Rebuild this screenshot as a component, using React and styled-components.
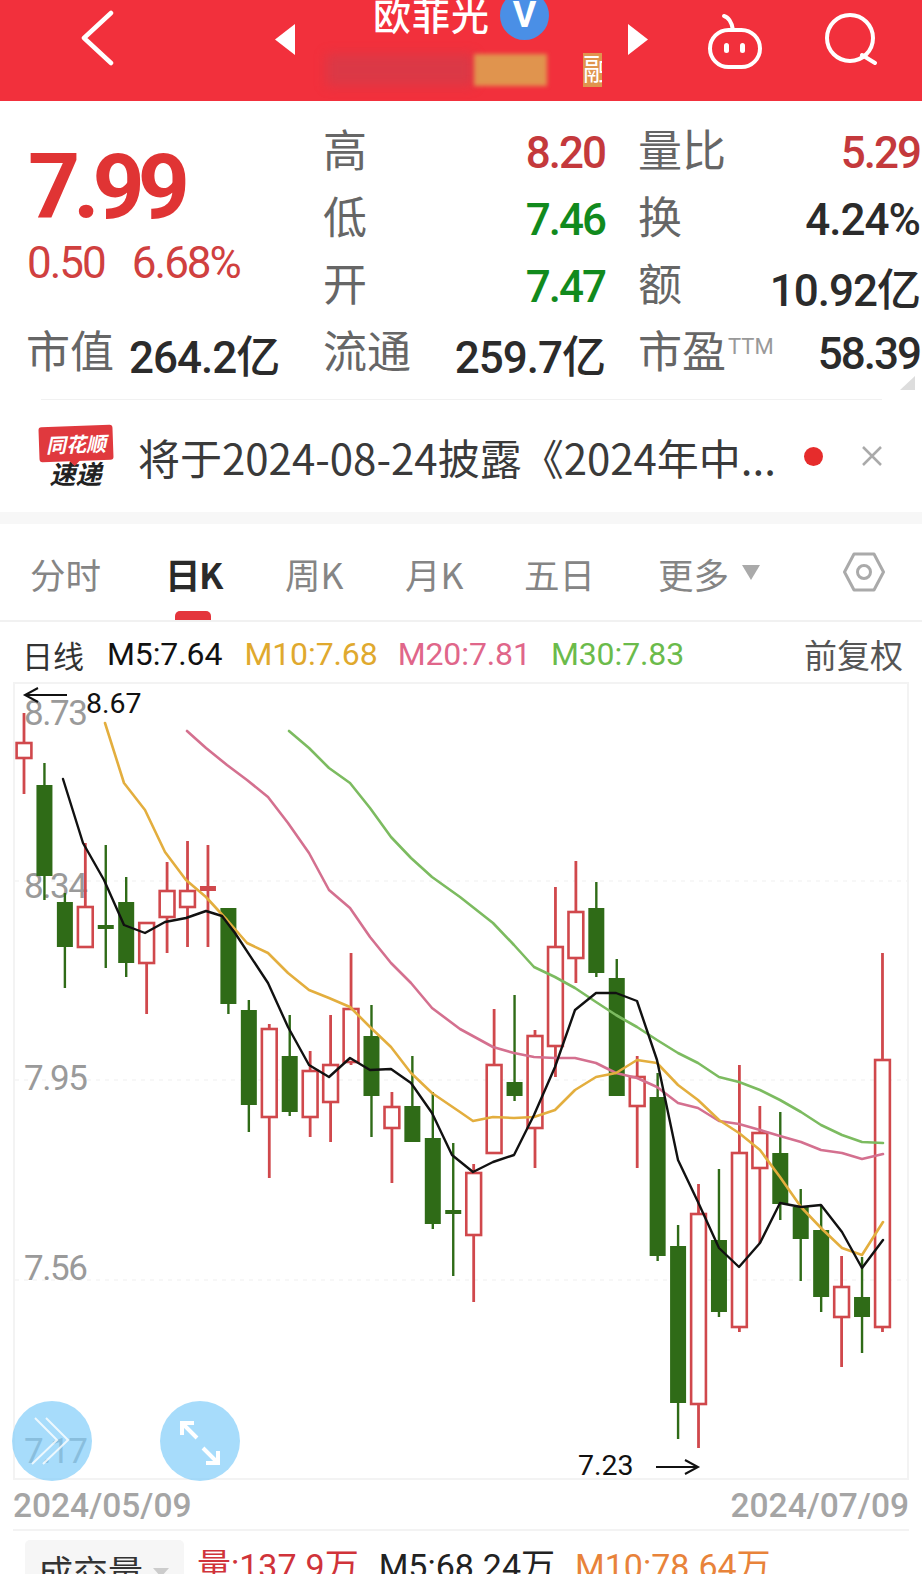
import styled, { createGlobalStyle } from 'styled-components';

const RED = '#d0484c';
const GREEN = '#2f6b17';

// up, body top, body bottom, high, low
const CANDLES = [
  [1, 743, 758, 713, 794],
  [0, 785, 876, 763, 900],
  [0, 902, 947, 893, 988],
  [1, 907, 947, 843, 947],
  [0, 925, 929, 845, 968],
  [0, 902, 963, 877, 977],
  [1, 923, 963, 923, 1014],
  [1, 891, 917, 862, 953],
  [1, 891, 907, 841, 947],
  [1, 886, 891, 845, 947],
  [0, 908, 1004, 908, 1014],
  [0, 1010, 1105, 1000, 1132],
  [1, 1029, 1117, 1024, 1178],
  [0, 1056, 1112, 1015, 1116],
  [1, 1071, 1117, 1051, 1137],
  [1, 1065, 1102, 1015, 1142],
  [1, 1009, 1062, 953, 1065],
  [0, 1036, 1096, 1005, 1137],
  [1, 1107, 1128, 1092, 1183],
  [0, 1106, 1142, 1056, 1142],
  [0, 1138, 1224, 1092, 1229],
  [0, 1210, 1214, 1143, 1276],
  [1, 1173, 1235, 1164, 1302],
  [1, 1065, 1153, 1009, 1153],
  [0, 1082, 1096, 995, 1101],
  [1, 1036, 1128, 1030, 1168],
  [1, 947, 1046, 887, 1077],
  [1, 912, 958, 861, 983],
  [0, 908, 973, 882, 977],
  [0, 978, 1096, 959, 1096],
  [1, 1077, 1106, 1056, 1168],
  [0, 1097, 1256, 1073, 1261],
  [0, 1246, 1403, 1225, 1439],
  [1, 1214, 1404, 1184, 1448],
  [0, 1240, 1312, 1169, 1317],
  [1, 1153, 1327, 1065, 1332],
  [1, 1133, 1168, 1106, 1243],
  [0, 1153, 1204, 1112, 1220],
  [0, 1207, 1239, 1189, 1281],
  [0, 1230, 1297, 1205, 1312],
  [1, 1287, 1317, 1256, 1367],
  [0, 1297, 1317, 1257, 1353],
  [1, 1060, 1327, 953, 1332],
];

const M5 = '63,779 83,843 104,880 124,925 145,933 165,922 186,918 206,911 222,916 235,933 268,983 288,1027 309,1065 329,1077 350,1058 370,1070 391,1069 411,1083 432,1113 452,1155 473,1172 493,1162 514,1155 534,1115 555,1067 575,1010 596,993 616,993 637,1001 657,1060 678,1160 698,1202 719,1248 739,1267 760,1243 780,1203 801,1207 821,1205 842,1232 862,1268 883,1240';
const M10 = '105,723 124,783 145,810 165,852 186,880 206,897 227,920 247,943 268,953 288,973 309,990 329,998 350,1007 370,1027 391,1047 411,1073 432,1093 460,1112 473,1121 493,1117 514,1118 534,1117 555,1110 575,1090 596,1077 616,1073 637,1060 657,1063 678,1085 698,1100 719,1120 739,1133 760,1150 780,1177 801,1207 821,1228 842,1248 862,1255 883,1222';
const M20 = '187,731 206,748 227,765 247,780 268,797 288,823 309,853 329,890 350,908 370,937 391,963 411,983 432,1008 460,1029 493,1047 514,1053 534,1057 555,1058 575,1058 596,1063 616,1073 637,1078 657,1087 678,1103 698,1108 719,1121 739,1124 760,1130 780,1136 801,1142 821,1150 842,1153 862,1159 883,1154';
const M30 = '289,731 309,748 329,768 350,783 370,808 391,837 411,858 432,877 460,897 493,923 514,945 534,967 555,977 575,988 596,1002 616,1015 637,1027 657,1040 678,1053 698,1063 719,1077 739,1082 760,1090 780,1100 801,1112 821,1125 842,1135 862,1142 883,1143';

const AXIS = [
  ['8.73', 725],
  ['8.34', 898],
  ['7.95', 1090],
  ['7.56', 1280],
  ['7.17', 1463],
];

const GlobalStyle = createGlobalStyle`
  html, body {
    margin: 0;
    padding: 0;
    background: #fff;
  }
  #root {
    width: 922px;
    height: 1574px;
    overflow: hidden;
    font-family: Roboto, "Noto Sans CJK SC", sans-serif;
  }
`;

const Header = styled.header`
  display: flex;
  align-items: flex-start;
  height: 101px;
  overflow: hidden;
  background: #f2303c;
`;

const HeaderIcon = styled.svg`
  flex: none;
  margin-left: ${p => p.$left}px;
  margin-top: ${p => p.$top}px;
`;

const TitleBlock = styled.div`
  flex: none;
  width: 277px;
  margin-left: 31px;
  margin-top: -3px;
`;

const TitleRow = styled.div`
  display: flex;
  align-items: center;
  height: 40px;
  padding-left: 47px;
`;

const Title = styled.span`
  color: #fff;
  font-size: 38px;
  font-weight: 500;
  line-height: 40px;
  letter-spacing: 1px;
  white-space: nowrap;
`;

const Badge = styled.span`
  flex: none;
  display: flex;
  align-items: center;
  justify-content: center;
  width: 49px;
  height: 49px;
  margin: -4px 0 0 10px;
  border-radius: 50%;
  background: #4a8fe6;
  color: #fff;
  font-size: 36px;
  font-weight: 700;
`;

const SubRow = styled.div`
  display: flex;
  align-items: center;
  height: 37px;
  margin-top: 14px;
`;

const Smudge = styled.span`
  flex: none;
  width: ${p => p.$w}px;
  height: ${p => p.$h}px;
  background: ${p => p.$color};
  filter: blur(${p => p.$blur}px);
`;

const TagClip = styled.span`
  flex: none;
  width: 19px;
  height: 34px;
  margin-left: 36px;
  overflow: hidden;
  background: #e0944e;
  color: #fff;
  font-size: 30px;
  line-height: 34px;
`;

const Stats = styled.section`
  position: relative;
  display: grid;
  grid-template-columns: 264px 282px 282px;
  grid-template-rows: repeat(4, 67px);
  column-gap: 33px;
  height: 299px;
  box-sizing: border-box;
  padding: 18px 0 0 26px;
  &::after {
    content: '';
    position: absolute;
    left: 41px;
    right: 40px;
    bottom: 0;
    height: 1px;
    background: #f1f1f1;
  }
`;

const PriceBlock = styled.div`
  grid-row: 1 / 4;
  padding-top: 36px;
  padding-left: 2px;
`;

const Price = styled.div`
  color: #e03434;
  font-size: 91px;
  font-weight: 700;
  line-height: 65px;
  letter-spacing: -7px;
`;

const Change = styled.div`
  display: flex;
  gap: 27px;
  margin-top: 28px;
  margin-left: -1px;
  color: #d0403f;
  font-size: 44px;
  font-weight: 400;
  line-height: 30px;
  letter-spacing: -2px;
`;

const StatCell = styled.div`
  display: flex;
  align-items: center;
  justify-content: ${p => (p.$tight ? 'flex-start' : 'space-between')};
  gap: ${p => (p.$tight ? '15px' : '0')};
  white-space: nowrap;
`;

const Label = styled.span`
  color: #666;
  font-size: 44px;
  line-height: 67px;
`;

const Sup = styled.sup`
  margin-left: 2px;
  color: #999;
  font-size: 22px;
  line-height: 0;
  vertical-align: 14px;
`;

const Value = styled.span`
  color: ${p => p.$color || '#2b2b2b'};
  font-size: 44px;
  font-weight: 500;
  letter-spacing: ${p => (p.$loose ? '-1px' : '-2px')};
`;

const CornerMark = styled.span`
  position: absolute;
  right: 7px;
  bottom: 10px;
  width: 0;
  height: 0;
  border-left: 15px solid transparent;
  border-bottom: 14px solid #ddd;
`;

const Notice = styled.section`
  display: flex;
  align-items: center;
  height: 112px;
  box-sizing: border-box;
  padding-left: 38px;
`;

const Logo = styled.div`
  flex: none;
  display: flex;
  flex-direction: column;
  align-items: center;
  width: 75px;
  margin-top: 2px;
`;

const LogoBubble = styled.span`
  position: relative;
  display: flex;
  align-items: center;
  justify-content: center;
  width: 74px;
  height: 35px;
  border-radius: 3px;
  background: #e0393e;
  color: #fff;
  font-size: 20px;
  font-weight: 700;
  font-style: italic;
  transform: rotate(-2deg);
  &::after {
    content: '';
    position: absolute;
    left: 29px;
    bottom: -5px;
    border-left: 6px solid transparent;
    border-right: 6px solid transparent;
    border-top: 6px solid #e0393e;
  }
`;

const LogoCaption = styled.span`
  margin-top: 1px;
  color: #222;
  font-size: 26px;
  font-weight: 700;
  font-style: italic;
  line-height: 27px;
`;

const NoticeText = styled.span`
  flex: none;
  width: 650px;
  margin-left: 25px;
  color: #3a3a3a;
  font-size: 42px;
  white-space: nowrap;
  font-family: "Noto Sans CJK SC", sans-serif;
`;

const RedDot = styled.span`
  flex: none;
  width: 19px;
  height: 19px;
  margin-left: 16px;
  border-radius: 50%;
  background: #e62c2c;
`;

const Band = styled.div`
  height: 12px;
  background: #f7f7f7;
`;

const Tabs = styled.nav`
  display: flex;
  align-items: center;
  height: 98px;
  box-sizing: border-box;
  padding: 0 37px 0 30px;
  border-bottom: 2px solid #f1f1f1;
`;

const Tab = styled.span`
  position: relative;
  flex: none;
  width: ${p => p.$w}px;
  padding-top: 4px;
  color: ${p => (p.$active ? '#2a2a2a' : '#858585')};
  font-size: 35.5px;
  font-weight: ${p => (p.$active ? 700 : 400)};
  font-family: "Noto Sans CJK SC", sans-serif;
  letter-spacing: ${p => (p.$active ? '-1.5px' : '0')};
  line-height: 92px;
  white-space: nowrap;
  &::after {
    content: ${p => (p.$active ? "''" : 'none')};
    position: absolute;
    left: 10px;
    bottom: 0;
    width: 36px;
    height: 9px;
    border-radius: 5px 5px 0 0;
    background: #e4353c;
  }
`;

const Caret = styled.span`
  flex: none;
  width: 0;
  height: 0;
  border-left: 9px solid transparent;
  border-right: 9px solid transparent;
  border-top: 15px solid #aaa;
`;

const HexIcon = styled.svg`
  flex: none;
  margin-left: auto;
`;

const Legend = styled.div`
  display: flex;
  align-items: center;
  gap: 20px;
  height: 60px;
  padding: 4px 19px 0 22px;
  box-sizing: border-box;
  font-size: 32px;
  white-space: nowrap;
`;

const LegendName = styled.span`
  margin-right: 3px;
  color: ${p => p.$color};
  font-size: 31px;
`;

const LegendItem = styled.span`
  margin-right: ${p => p.$after || 0}px;
  color: ${p => p.$color};
  letter-spacing: -0.1px;
`;

const AdjustLabel = styled.span`
  margin-left: auto;
  color: #555;
  font-size: 33px;
`;

const ChartFrame = styled.div`
  position: relative;
  width: 892px;
  height: 794px;
  margin-left: 13px;
  border: 2px solid #f3f3f3;
`;

const ChartSvg = styled.svg`
  display: block;
  overflow: visible;
  font-family: Roboto, sans-serif;
`;

const FloatButton = styled.div`
  position: absolute;
  left: ${p => p.$left}px;
  top: 717px;
  width: 80px;
  height: 80px;
  border-radius: 50%;
  background: rgba(130, 205, 250, 0.7);
`;

const DateRow = styled.div`
  display: flex;
  justify-content: space-between;
  align-items: center;
  height: 49px;
  padding-top: 2px;
  margin: 0 13px;
  box-sizing: border-box;
  color: #a5a5a5;
  font-size: 33.5px;
  font-weight: 500;
`;

const VolumePanel = styled.div`
  display: flex;
  align-items: flex-start;
  gap: 20px;
  margin: 0 13px;
  padding: 9px 0 0 12px;
  border-top: 2px solid #f3f3f3;
  white-space: nowrap;
`;

const VolumeSelect = styled.div`
  flex: none;
  display: flex;
  align-items: center;
  width: 146px;
  height: 60px;
  padding: 0 0 20px 13px;
  margin-right: -7px;
  box-sizing: content-box;
  border-radius: 5px 5px 0 0;
  background: #f6f6f6;
  color: #333;
  font-size: 35px;
  font-family: "Noto Sans CJK SC", sans-serif;
`;

const SmallCaret = styled.span`
  flex: none;
  width: 0;
  height: 0;
  margin: 4px 0 0 10px;
  border-left: 8px solid transparent;
  border-right: 8px solid transparent;
  border-top: 9px solid #ccc;
`;

const VolumeValue = styled.span`
  margin-top: 4px;
  color: ${p => p.$color};
  font-size: 34px;
  line-height: 44px;
`;

function Candle({ data, index }) {
  const [up, top, bottom, high, low] = data;
  const x = 24 + index * 20.44;
  const color = up ? RED : GREEN;
  const flat = bottom - top <= 5;
  return (
    <g>
      <line x1={x} x2={x} y1={high} y2={low} stroke={color} strokeWidth={up ? 2.8 : 2.4} />
      {up && !flat ? (
        <rect x={x - 7.4} y={top} width={14.8} height={bottom - top} fill="#fff" stroke={color} strokeWidth={2.6} />
      ) : (
        <rect x={x - 8} y={top} width={16} height={bottom - top} fill={color} />
      )}
    </g>
  );
}

function Chart() {
  return (
    <ChartSvg width="892" height="794" viewBox="15 684 892 794">
      {[881, 1080, 1280].map(y => (
        <line key={y} x1="15" x2="907" y1={y} y2={y} stroke="#efefef" strokeWidth="1" strokeDasharray="4 5" />
      ))}
      {AXIS.map(([text, y]) => (
        <text key={text} x="24" y={y} fill="#9a9a9a" fontSize="35" letterSpacing="-1.4">
          {text}
        </text>
      ))}
      {CANDLES.map((c, i) => (
        <Candle key={i} data={c} index={i} />
      ))}
      <g fill="none" strokeWidth="2.6" strokeLinejoin="round" strokeLinecap="round">
        <polyline points={M30} stroke="#7cbb60" />
        <polyline points={M20} stroke="#d4708f" />
        <polyline points={M10} stroke="#e3ae3e" />
        <polyline points={M5} stroke="#111" strokeWidth="2.4" />
      </g>
      <path d="M67 695H25M38 688L25 695L38 702" fill="none" stroke="#111" strokeWidth="2" />
      <text x="86" y="713" fill="#111" fontSize="28.500">8.67</text>
      <text x="578" y="1475" fill="#111" fontSize="28.500">7.23</text>
      <path d="M656 1467H698M685 1460L698 1467L685 1474" fill="none" stroke="#111" strokeWidth="2" />
    </ChartSvg>
  );
}

export default function App() {
  return (
    <>
      <GlobalStyle />
      <Header>
        <HeaderIcon $left={80} $top={10} width="34" height="56" viewBox="0 0 34 56">
          <path d="M31 3L4 28L31 53" fill="none" stroke="#fff" strokeWidth="4.5" strokeLinecap="round" strokeLinejoin="round" />
        </HeaderIcon>
        <HeaderIcon $left={161} $top={24} width="20" height="31" viewBox="0 0 20 31">
          <path d="M20 0V31L0 15.5Z" fill="#fff" />
        </HeaderIcon>
        <TitleBlock>
          <TitleRow>
            <Title>欧菲光</Title>
            <Badge>V</Badge>
          </TitleRow>
          <SubRow>
            <Smudge $w={148} $h={32} $color="rgba(185,70,85,.4)" $blur={6} />
            <Smudge $w={73} $h={32} $color="#e0944e" $blur={2} />
            <TagClip>融</TagClip>
          </SubRow>
        </TitleBlock>
        <HeaderIcon $left={25} $top={24} width="20" height="31" viewBox="0 0 20 31">
          <path d="M0 0V31L20 15.5Z" fill="#fff" />
        </HeaderIcon>
        <HeaderIcon $left={59} $top={12} width="56" height="57" viewBox="0 0 56 57">
          <path d="M17 4C21 5 25 10 26 18" fill="none" stroke="#fff" strokeWidth="4" strokeLinecap="round" />
          <rect x="3" y="18" width="50" height="37" rx="18.5" fill="none" stroke="#fff" strokeWidth="4" />
          <rect x="17" y="31" width="5" height="10" rx="2.5" fill="#fff" />
          <rect x="33" y="31" width="5" height="10" rx="2.5" fill="#fff" />
        </HeaderIcon>
        <HeaderIcon $left={62} $top={13} width="54" height="52" viewBox="0 0 54 52">
          <circle cx="25" cy="25" r="23" fill="none" stroke="#fff" strokeWidth="4" />
          <path d="M37 42L50 50" fill="none" stroke="#fff" strokeWidth="4" strokeLinecap="round" />
        </HeaderIcon>
      </Header>

      <Stats>
        <PriceBlock>
          <Price>7.99</Price>
          <Change>
            <span>0.50</span>
            <span>6.68%</span>
          </Change>
        </PriceBlock>
        <StatCell>
          <Label>高</Label>
          <Value $color="#c4393c">8.20</Value>
        </StatCell>
        <StatCell>
          <Label>量比</Label>
          <Value $color="#c4393c">5.29</Value>
        </StatCell>
        <StatCell>
          <Label>低</Label>
          <Value $color="#118a1d">7.46</Value>
        </StatCell>
        <StatCell>
          <Label>换</Label>
          <Value $loose>4.24%</Value>
        </StatCell>
        <StatCell>
          <Label>开</Label>
          <Value $color="#118a1d">7.47</Value>
        </StatCell>
        <StatCell>
          <Label>额</Label>
          <Value $loose>10.92亿</Value>
        </StatCell>
        <StatCell $tight>
          <Label>市值</Label>
          <Value $loose>264.2亿</Value>
        </StatCell>
        <StatCell>
          <Label>流通</Label>
          <Value $loose>259.7亿</Value>
        </StatCell>
        <StatCell>
          <Label>
            市盈<Sup>TTM</Sup>
          </Label>
          <Value>58.39</Value>
        </StatCell>
        <CornerMark />
      </Stats>

      <Notice>
        <Logo>
          <LogoBubble>同花顺</LogoBubble>
          <LogoCaption>速递</LogoCaption>
        </Logo>
        <NoticeText>将于2024-08-24披露《2024年中...</NoticeText>
        <RedDot />
        <HeaderIcon $left={38} $top={0} width="22" height="20" viewBox="0 0 22 20">
          <path d="M2 1L20 19M20 1L2 19" fill="none" stroke="#aaa" strokeWidth="2.5" />
        </HeaderIcon>
      </Notice>
      <Band />

      <Tabs>
        <Tab $w={135}>分时</Tab>
        <Tab $w={120} $active>日K</Tab>
        <Tab $w={120}>周K</Tab>
        <Tab $w={119}>月K</Tab>
        <Tab $w={134}>五日</Tab>
        <Tab $w={84}>更多</Tab>
        <Caret />
        <HexIcon width="42" height="40" viewBox="0 0 42 40">
          <path d="M1.5 20L11 2H31L40.500 20L31 38H11Z" fill="none" stroke="#aaa" strokeWidth="3" strokeLinejoin="round" />
          <circle cx="21" cy="20" r="6.500" fill="none" stroke="#aaa" strokeWidth="3" />
        </HexIcon>
      </Tabs>

      <Legend>
        <LegendName $color="#333">日线</LegendName>
        <LegendItem $color="#111" $after={2}>M5:7.64</LegendItem>
        <LegendItem $color="#e0a92e">M10:7.68</LegendItem>
        <LegendItem $color="#e0668a">M20:7.81</LegendItem>
        <LegendItem $color="#6bbb4b">M30:7.83</LegendItem>
        <AdjustLabel>前复权</AdjustLabel>
      </Legend>

      <ChartFrame>
        <Chart />
        <FloatButton $left={-3}>
          <svg width="80" height="80" viewBox="0 0 80 80" fill="none" stroke="#fff" strokeWidth="2" opacity="0.8">
            <path d="M34 17L56 39L31 63" />
            <path d="M23 17L45 39L20 63" />
          </svg>
        </FloatButton>
        <FloatButton $left={145}>
          <svg width="80" height="80" viewBox="0 0 80 80" fill="none" stroke="#fff" strokeWidth="4">
            <path d="M22 34V22H34M22 22L37 37" />
            <path d="M58 50V62H46M58 62L43 47" />
          </svg>
        </FloatButton>
      </ChartFrame>

      <DateRow>
        <span>2024/05/09</span>
        <span>2024/07/09</span>
      </DateRow>

      <VolumePanel>
        <VolumeSelect>
          成交量
          <SmallCaret />
        </VolumeSelect>
        <VolumeValue $color="#d0333a">量:137.9万</VolumeValue>
        <VolumeValue $color="#222">M5:68.24万</VolumeValue>
        <VolumeValue $color="#e8833a">M10:78.64万</VolumeValue>
      </VolumePanel>
    </>
  );
}
